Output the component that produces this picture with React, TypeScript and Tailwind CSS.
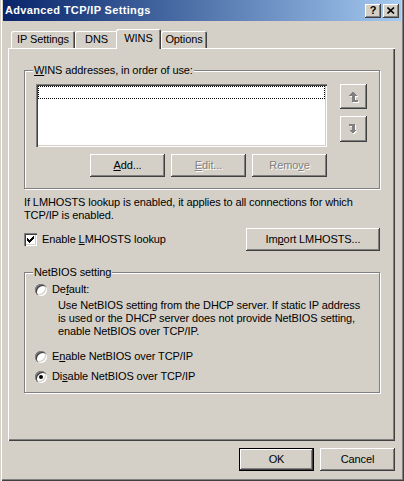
import React from 'react'

const raised =
  'shadow-[inset_-1px_-1px_#404040,inset_1px_1px_#fff,inset_-2px_-2px_#808080,inset_2px_2px_#d4d0c8]'
const sunken =
  'shadow-[inset_1px_1px_#808080,inset_2px_2px_#404040,inset_-1px_-1px_#fff,inset_-2px_-2px_#d4d0c8]'

function Button({
  children,
  width = 'w-[75px]',
  disabled = false,
  isDefault = false,
}: {
  children: React.ReactNode
  width?: string
  disabled?: boolean
  isDefault?: boolean
}) {
  if (isDefault) {
    return (
      <div className={`${width} h-[23px] border border-black bg-[#d4d0c8]`}>
        <div className={`h-full flex items-center justify-center ${raised}`}>{children}</div>
      </div>
    )
  }
  return (
    <div
      className={`${width} h-[23px] flex items-center justify-center bg-[#d4d0c8] ${raised} ${
        disabled ? 'text-[#808080] [text-shadow:1px_1px_#fff]' : ''
      }`}
    >
      {children}
    </div>
  )
}

function GroupBox({
  label,
  height,
  className = '',
  children,
}: {
  label: React.ReactNode
  height: string
  className?: string
  children: React.ReactNode
}) {
  return (
    <div className={`relative ${height} border border-[#808080] shadow-[inset_1px_1px_#fff,1px_1px_#fff] ${className}`}>
      <span className="absolute left-[8px] top-[-7px] px-[1px] bg-[#d4d0c8] leading-[13px]">{label}</span>
      {children}
    </div>
  )
}

function Radio({ checked = false, children }: { checked?: boolean; children: React.ReactNode }) {
  return (
    <div className="flex items-center h-[13px] gap-[5px]">
      <div className={`w-[12px] h-[12px] rounded-full bg-white flex items-center justify-center ${sunken}`}>
        {checked && <div className="w-[4px] h-[4px] rounded-full bg-black" />}
      </div>
      <span className="leading-[13px]">{children}</span>
    </div>
  )
}

function ArrowIcon({ down = false }: { down?: boolean }) {
  const pts = down ? '0,0 6,0 6,6 8,6 4,10 0,6 3,6 3,2 0,2' : '4,0 8,4 6,4 6,8 9,8 9,10 3,10 3,4 0,4'
  return (
    <svg width="11" height="12" viewBox="0 0 11 12" shapeRendering="crispEdges">
      <polygon points={pts} fill="#fff" transform="translate(1.5,1.5)" />
      <polygon points={pts} fill="#808080" transform="translate(0.5,0.5)" />
    </svg>
  )
}

function Tab({ label, selected = false, width }: { label: string; selected?: boolean; width: string }) {
  return (
    <div
      className={`${width} flex items-center justify-center bg-[#d4d0c8] rounded-t-[2px] shadow-[inset_1px_1px_#fff,inset_-1px_0_#404040,inset_-2px_0_#808080] ${
        selected ? 'h-[20px] -ml-[2px] mb-[-1px] relative z-10 pb-[2px]' : 'h-[17px]'
      }`}
    >
      {label}
    </div>
  )
}

export default function App() {
  return (
    <div className="w-[404px] h-[481px] bg-[#d4d0c8] flex flex-col px-[3px] pb-[3px] text-[11px] tracking-[-0.1px] text-black font-['Liberation_Sans',Arial,sans-serif] shadow-[inset_1px_0_#d4d0c8,inset_2px_0_#fff,inset_-1px_-1px_#404040,inset_-2px_-2px_#808080]">
      {/* title bar */}
      <div className="h-[21px] flex items-center justify-between pl-[2px] pr-[2px] bg-gradient-to-r from-[#0a246a] to-[#a6caf0]">
        <span className="font-bold text-white text-[11px] tracking-[0.35px]">Advanced TCP/IP Settings</span>
        <div className="flex gap-[2px]">
          <div className={`w-[16px] h-[14px] flex items-center justify-center bg-[#d4d0c8] font-bold text-[11px] leading-none ${raised}`}>
            ?
          </div>
          <div className={`w-[16px] h-[14px] flex items-center justify-center bg-[#d4d0c8] ${raised}`}>
            <svg width="8" height="7" viewBox="0 0 8 7">
              <path d="M0.5 0.5 L7 6.5 M7 0.5 L0.5 6.5" stroke="#000" strokeWidth="1.6" />
            </svg>
          </div>
        </div>
      </div>

      {/* tabs */}
      <div className="mt-[8px] ml-[5px] w-[387px]">
        <div className="flex items-end h-[19px] pl-[3px]">
          <Tab label="IP Settings" width="w-[64px]" />
          <Tab label="DNS" width="w-[43px]" />
          <Tab label="WINS" width="w-[45px]" selected />
          <Tab label="Options" width="w-[46px]" />
        </div>
        <div className="h-[393px] flex flex-col pl-[16px] pr-[15px] pt-[22px] shadow-[inset_1px_1px_#fff,inset_-1px_-1px_#404040,inset_-2px_-2px_#808080]">
          <GroupBox
            height="h-[119px]"
            label={
              <>
                <u>W</u>INS addresses, in order of use:
              </>
            }
          >
            <div className="pt-[13px] pl-[11px]">
              <div className="flex">
                <div className={`w-[291px] h-[63px] bg-white p-[2px] ${sunken}`}>
                  <div className="h-[13px] border border-dotted border-black" />
                </div>
                <div className="ml-[13px] flex flex-col gap-[7px]">
                  <div className={`w-[27px] h-[25px] flex items-center justify-center ${raised}`}>
                    <ArrowIcon />
                  </div>
                  <div className={`w-[27px] h-[26px] flex items-center justify-center ${raised}`}>
                    <ArrowIcon down />
                  </div>
                </div>
              </div>
              <div className="w-[291px] mt-[7px] flex justify-end gap-[6px]">
                <Button>
                  <span>
                    <u>A</u>dd...
                  </span>
                </Button>
                <Button disabled>
                  <span>
                    <u>E</u>dit...
                  </span>
                </Button>
                <Button disabled>
                  <span>
                    Remo<u>v</u>e
                  </span>
                </Button>
              </div>
            </div>
          </GroupBox>

          <p className="mt-[7px] leading-[13px]">
            If LMHOSTS lookup is enabled, it applies to all connections for which
            <br />
            TCP/IP is enabled.
          </p>

          <div className="mt-[6px] h-[23px] flex items-center justify-between">
            <div className="flex items-center gap-[5px]">
              <div className={`w-[13px] h-[13px] bg-white flex items-center justify-center ${sunken}`}>
                <svg width="7" height="7" viewBox="0 0 7 7" shapeRendering="crispEdges">
                  <path d="M0 2h1v3h-1z M1 3h1v3h-1z M2 4h1v3h-1z M3 3h1v3h-1z M4 2h1v3h-1z M5 1h1v3h-1z M6 0h1v3h-1z" fill="#000" />
                </svg>
              </div>
              <span>
                Enable <u>L</u>MHOSTS lookup
              </span>
            </div>
            <Button width="w-[134px]">
              <span>
                Im<u>p</u>ort LMHOSTS...
              </span>
            </Button>
          </div>

          <GroupBox height="h-[121px]" className="mt-[21px]" label="NetBIOS setting">
            <div className="pt-[10px] pl-[10px]">
              <Radio>
                De<u>f</u>ault:
              </Radio>
              <div className="mt-[3px] pl-[23px] leading-[13px]">
                Use NetBIOS setting from the DHCP server. If static IP address
                <br />
                is used or the DHCP server does not provide NetBIOS setting,
                <br />
                enable NetBIOS over TCP/IP.
              </div>
              <div className="mt-[12px]">
                <Radio>
                  E<u>n</u>able NetBIOS over TCP/IP
                </Radio>
              </div>
              <div className="mt-[7px]">
                <Radio checked>
                  Di<u>s</u>able NetBIOS over TCP/IP
                </Radio>
              </div>
            </div>
          </GroupBox>
        </div>
      </div>

      {/* dialog buttons */}
      <div className="mt-[7px] mr-[6px] flex justify-end gap-[6px]">
        <Button isDefault>OK</Button>
        <Button>Cancel</Button>
      </div>
    </div>
  )
}
